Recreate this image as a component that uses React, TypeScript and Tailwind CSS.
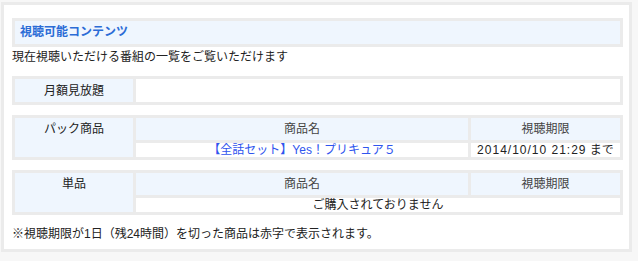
const font = { fontFamily: '"Liberation Sans", "Noto Sans CJK JP", sans-serif' };

type Row = { title: string; limit: string; link?: boolean };

function LabelTable({ label }: { label: string }) {
  return (
    <div className="mt-[9px] grid grid-cols-[118px_1fr] gap-[3px] bg-[#ebebeb] p-[3px]">
      <div className="flex h-[23px] items-center justify-center bg-[#eff6fe]">{label}</div>
      <div className="bg-white" />
    </div>
  );
}

function ProductTable({ label, rows, empty }: { label: string; rows: Row[]; empty?: string }) {
  return (
    <div className="mt-[10px] grid grid-cols-[118px_332px_1fr] gap-[3px] bg-[#ebebeb] p-[3px]">
      <div className="row-span-2 flex justify-center bg-[#eff6fe] leading-[22px]">{label}</div>
      <div className="h-[22px] bg-[#eff6fe] text-center leading-[22px] text-[#444]">商品名</div>
      <div className="h-[22px] bg-[#eff6fe] text-center leading-[22px] text-[#444]">視聴期限</div>
      {rows.length > 0 ? (
        rows.map((r) => (
          <div key={r.title} className="contents">
            <div className="h-[14px] bg-white text-center leading-[14px] text-[#2f55ee]">{r.title}</div>
            <div className="h-[14px] bg-white text-center leading-[14px]">
              <span className="tracking-[1px]">{r.limit}</span> まで
            </div>
          </div>
        ))
      ) : (
        <div className="col-span-2 h-[14px] bg-white text-center leading-[14px]">{empty}</div>
      )}
    </div>
  );
}

export default function App() {
  return (
    <div className="h-[261px] w-[638px] bg-[#f7f7f7] pl-[1px] pt-[2px] text-[12px] text-[#222]" style={font}>
      <div className="h-[250px] w-[631px] border-[3px] border-[#ebebeb] bg-white pl-[8px] pr-[6px] pt-[13px]">
        <div className="h-[29px] border-[3px] border-[#ebebeb] bg-[#eff6fe] pl-[5px] text-[12px] font-bold leading-[23px] text-[#2b6cd6]">
          視聴可能コンテンツ
        </div>
        <p className="leading-[20px]">現在視聴いただける番組の一覧をご覧いただけます</p>

        <LabelTable label="月額見放題" />

        <ProductTable
          label="パック商品"
          rows={[{ title: '【全話セット】Yes！プリキュア５', limit: '2014/10/10 21:29' }]}
        />

        <ProductTable label="単品" rows={[]} empty="ご購入されておりません" />

        <p className="mt-[9px] leading-[20px]">
          ※視聴期限が1日（残24時間）を切った商品は赤字で表示されます。
        </p>
      </div>
    </div>
  );
}
